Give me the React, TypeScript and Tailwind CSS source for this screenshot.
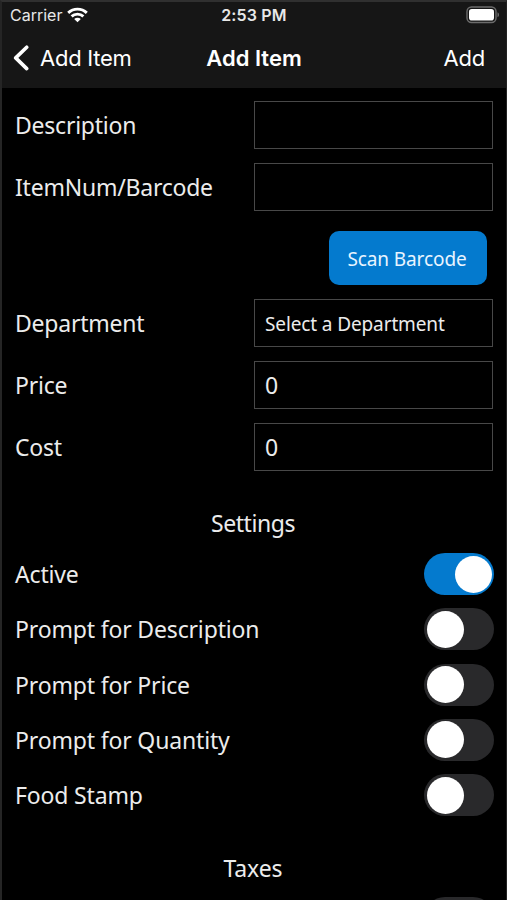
import React from "react";

function Field({ label, value = "", small = false }: { label: string; value?: string; small?: boolean }) {
  return (
    <div className="flex h-12 items-center justify-between pr-[13px] pl-[13px]">
      <label className="text-[23px] leading-8 tracking-[-0.23px]">{label}</label>
      <div className="flex h-12 w-[239px] items-center border border-[#484848] pl-[10px]">
        <span className={small ? "pt-[2px] text-[19px] leading-7 tracking-[-0.12px]" : "text-[23px] leading-8"}>{value}</span>
      </div>
    </div>
  );
}

function Toggle({ on = false }: { on?: boolean }) {
  return (
    <div
      className={
        "flex h-[42px] w-[70px] shrink-0 items-center rounded-full px-[2.5px] " +
        (on ? "justify-end bg-[#047ace]" : "justify-start bg-[#29292b]")
      }
    >
      <div className="size-[37px] rounded-full bg-white" />
    </div>
  );
}

function Setting({ label, on = false }: { label: string; on?: boolean }) {
  return (
    <div className="flex h-[55.25px] shrink-0 items-center justify-between pr-[12px] pl-[13px]">
      <span className="text-[23px] leading-8 tracking-[-0.16px]">{label}</span>
      <Toggle on={on} />
    </div>
  );
}

const settings = ["Prompt for Description", "Prompt for Price", "Prompt for Quantity", "Food Stamp"];

export default function App() {
  return (
    <div className="flex h-[900px] w-[507px] flex-col overflow-hidden border-t-2 border-r border-l-2 border-t-[#303030] border-r-[#222222] border-l-[#252525] bg-black font-['Noto_Sans',sans-serif] text-[#ececec]">
      <header className="h-[86px] shrink-0 bg-[#161616] font-['Inter',sans-serif] text-white">
        <div className="grid h-[26px] grid-cols-3 items-center pr-[8px] pl-[8px] text-[#e8e8e8]">
          <div className="flex items-center gap-[5px]">
            <span className="text-[16px] leading-5">Carrier</span>
            <svg width="21" height="16" viewBox="0 0 21 16" fill="none" stroke="white" strokeWidth="2.9">
              <path d="M1.2 5.9C6.4 .9 14.6 .9 19.8 5.9" />
              <path d="M4.6 9.4C7.9 6.3 13.1 6.3 16.4 9.4" />
              <path d="M7.2 11.9C9 10.2 12 10.2 13.8 11.9L10.5 15.2Z" fill="white" stroke="none" />
            </svg>
          </div>
          <span className="text-center text-[16px] leading-5 font-semibold tracking-[0.15px]">2:53 PM</span>
          <svg className="-mr-[2px] justify-self-end" width="34" height="18" viewBox="0 0 34 18">
            <rect x="1" y="1" width="29" height="15.5" rx="4.5" fill="none" stroke="#6c6c6c" strokeWidth="1.4" />
            <rect x="3" y="3" width="25" height="11.5" rx="2.8" fill="white" />
            <path d="M31.5 6.3C33.5 7.2 33.5 10.3 31.5 11.2Z" fill="#6c6c6c" />
          </svg>
        </div>
        <div className="grid h-[60px] grid-cols-[1fr_auto_1fr] items-center">
          <div className="flex items-center gap-[11px] pl-[10px]">
            <svg width="17" height="28" viewBox="0 0 17 28" fill="none" stroke="white" strokeWidth="3.6" strokeLinecap="round" strokeLinejoin="round">
              <path d="M14.7 3.2L3.7 13.9L14.7 24.6" />
            </svg>
            <span className="text-[22px] leading-8 tracking-[-0.25px] whitespace-nowrap">Add Item</span>
          </div>
          <span className="text-center text-[22px] leading-8 font-semibold whitespace-nowrap">Add Item</span>
          <span className="pr-[21px] text-right text-[22px] leading-8 tracking-[-0.2px]">Add</span>
        </div>
      </header>

      <main className="flex shrink-0 flex-col pt-[13px]">
        <div className="flex flex-col gap-[14px]">
          <Field label="Description" />
          <Field label="ItemNum/Barcode" />
        </div>
        <div className="flex justify-end pt-5 pr-[19px] pb-[14px]">
          <button className="h-[54px] w-[158px] rounded-[10px] bg-[#047ace] pt-[2px] pr-[2px] text-[19px] leading-7 tracking-[-0.1px] text-[#e8f4ff]">
            Scan Barcode
          </button>
        </div>
        <div className="flex flex-col gap-[14px]">
          <Field label="Department" value="Select a Department" small />
          <Field label="Price" value="0" />
          <Field label="Cost" value="0" />
        </div>
        <h2 className="mt-9 mb-[7.5px] pr-[2px] text-center text-[23px] leading-8 tracking-[-0.45px]">Settings</h2>
        <Setting label="Active" on />
        {settings.map((label) => (
          <Setting key={label} label={label} />
        ))}
        <h2 className="mt-[29px] mb-[7px] pr-[2px] text-center text-[23px] leading-8 tracking-[-0.1px]">Taxes</h2>
        <Setting label="" />
      </main>
    </div>
  );
}
